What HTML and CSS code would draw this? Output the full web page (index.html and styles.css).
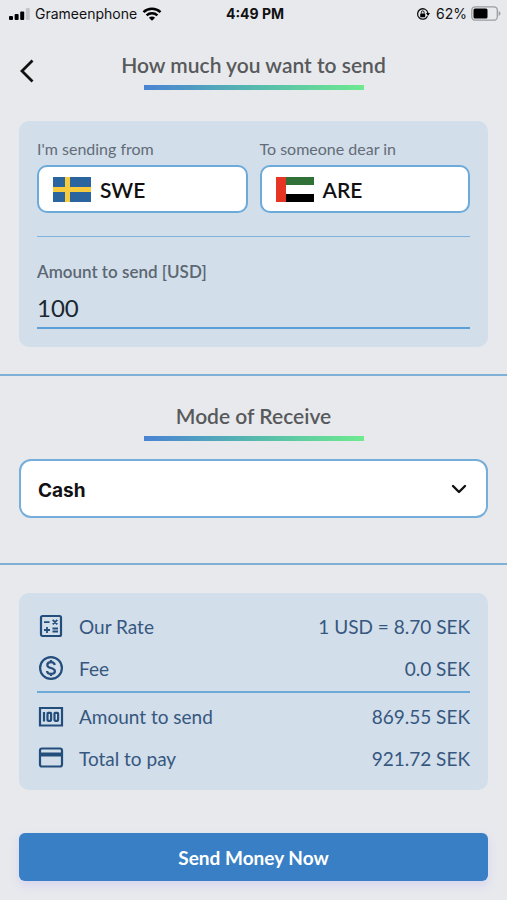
FILE: index.html
```html
<!DOCTYPE html>
<html lang="en">
<head>
<meta charset="utf-8">
<meta name="viewport" content="width=device-width, initial-scale=1">
<title>Send money</title>
<link rel="stylesheet" href="styles.css">
</head>
<body>
<div class="status">
  <div class="status-side">
    <svg class="signal" width="21" height="12" viewBox="0 0 21 12" aria-hidden="true">
      <rect x="0" y="8" width="4" height="4" rx="1"/>
      <rect x="5.600" y="6" width="4" height="6" rx="1"/>
      <rect x="11.200" y="3.500" width="4" height="8.500" rx="1"/>
      <rect x="16.800" y="0" width="4" height="12" rx="1" fill="#c3c5c9"/>
    </svg>
    <span>Grameenphone</span>
    <svg width="20" height="14" viewBox="0 0 20 14" aria-hidden="true">
      <path d="M1.500 5.200a12.300 12.300 0 0 1 17 0M4.600 8.300a7.900 7.900 0 0 1 10.800 0" fill="none" stroke="#000" stroke-width="2.500"/>
      <path d="M10 13.800 6.900 10.700a4.400 4.400 0 0 1 6.200 0z"/>
    </svg>
  </div>
  <time class="clock">4:49 PM</time>
  <div class="status-side status-end">
    <svg class="lock" width="14" height="14" viewBox="0 0 14 14" aria-hidden="true">
      <path d="M11.900 6a5.200 5.200 0 1 0-.4 3.200" fill="none" stroke="#111" stroke-width="1.300"/>
      <path d="M10 6h4l-2 3z"/>
      <rect x="4.200" y="6.400" width="5" height="3.800" rx=".6"/>
      <path d="M5.300 6.500V5.300a1.400 1.400 0 0 1 2.800 0v1.200" fill="none" stroke="#111"/>
    </svg>
    <span>62%</span>
    <svg width="30" height="15" viewBox="0 0 30 15" aria-hidden="true">
      <rect x=".8" y=".8" width="25.500" height="13.400" rx="3.500" fill="none" stroke="#9b9da0" stroke-width="1.300"/>
      <rect x="2.500" y="2.500" width="14" height="10" rx="1.500"/>
      <path d="M27.600 5a2.600 2.600 0 0 1 0 5z" fill="#9b9da0"/>
    </svg>
  </div>
</div>

<header class="header">
  <button class="back" type="button" aria-label="Back">
    <svg width="14" height="24" viewBox="0 0 14 24" aria-hidden="true"><path d="M12.500 1.500 2 12l10.500 10.500" fill="none" stroke="#111" stroke-width="2.800"/></svg>
  </button>
  <h1 class="title">How much you want to send</h1>
</header>

<main>
  <section class="card transfer">
    <div class="countries">
      <div class="country">
        <label class="label" for="from">I'm sending from</label>
        <button class="picker" id="from" type="button">
          <svg width="38" height="25" viewBox="0 0 38 25" aria-hidden="true">
            <path fill="#2b659f" d="M0 0h38v25H0z"/>
            <path fill="#f7cb3e" d="M12 0h5v25h-5zM0 10h38v5H0z"/>
          </svg>
          <span>SWE</span>
        </button>
      </div>
      <div class="country">
        <label class="label" for="to">To someone dear in</label>
        <button class="picker" id="to" type="button">
          <svg width="38" height="25" viewBox="0 0 38 25" aria-hidden="true">
            <path fill="#fff" d="M0 0h38v25H0z"/>
            <path fill="#2f7137" d="M0 0h38v8H0z"/>
            <path d="M0 17h38v8H0z"/>
            <path fill="#e73524" d="M0 0h10v25H0z"/>
          </svg>
          <span>ARE</span>
        </button>
      </div>
    </div>
    <div class="amount">
      <label class="amount-label" for="amount">Amount to send [USD]</label>
      <input class="amount-input" id="amount" type="text" inputmode="decimal" value="100">
    </div>
  </section>

  <section class="mode">
    <h2 class="title"><label for="mode">Mode of Receive</label></h2>
    <div class="select-wrap">
      <select class="select" id="mode"><option>Cash</option></select>
      <svg class="chevron" width="16" height="10" viewBox="0 0 16 10" aria-hidden="true"><path d="M2 2l6 6 6-6" fill="none" stroke="#111" stroke-width="2.400" stroke-linecap="round" stroke-linejoin="round"/></svg>
    </div>
  </section>

  <dl class="card summary">
    <div class="row">
      <dt>
        <svg class="icon" viewBox="0 0 24 24" aria-hidden="true"><rect x="2" y="2" width="20" height="20" rx="1.500"/><path d="M5 8.200h5.500M13.700 5.800l4.600 4.600M18.300 5.800l-4.600 4.600M5 16h6M8 13v6M13.500 14.500h5.500M13.500 17.500h5.500" stroke-width="1.800"/></svg>
        Our Rate
      </dt>
      <dd>1 USD = 8.70 SEK</dd>
    </div>
    <div class="row">
      <dt>
        <svg class="icon" viewBox="0 0 24 24" aria-hidden="true"><circle cx="12" cy="12" r="10.900"/><path d="M15.800 9c-.4-1.800-1.800-2.800-3.800-2.800S8.300 7.200 8.300 8.900c0 2 1.700 2.600 3.700 3.100s3.900 1.200 3.900 3.200c0 1.700-1.600 2.700-3.900 2.700-2.200 0-3.800-1-4-2.900M12 4v2.500M12 17.500V20"/></svg>
        Fee
      </dt>
      <dd>0.0 SEK</dd>
    </div>
    <div class="row row-split">
      <dt>
        <svg class="icon" viewBox="0 0 24 24" aria-hidden="true"><path d="M1 3h22v17.500H1zM5 7v9.500"/><rect x="8.500" y="7.800" width="3.600" height="8" rx=".7"/><rect x="15.500" y="7.800" width="3.600" height="8" rx=".7"/></svg>
        Amount to send
      </dt>
      <dd>869.55 SEK</dd>
    </div>
    <div class="row">
      <dt>
        <svg class="icon" viewBox="0 0 24 24" aria-hidden="true"><rect x="1" y="2.500" width="22" height="18" rx="2"/><path d="M1 8.500h22" stroke-width="4"/></svg>
        Total to pay
      </dt>
      <dd>921.72 SEK</dd>
    </div>
  </dl>

  <button class="submit" type="button">Send Money Now</button>
</main>
</body>
</html>
```
FILE: styles.css
```css
* {
  box-sizing: border-box;
}

body {
  margin: 0;
  background: #e7e9ed;
  color: #111;
  font-family: Lato, "Liberation Sans", sans-serif;
}

svg {
  display: block;
  flex: none;
}

button,
input,
select {
  color: inherit;
  font: inherit;
}

.status {
  display: grid;
  grid-template-columns: 1fr auto 1fr;
  align-items: center;
  height: 27px;
  padding: 0 6px 0 9px;
  font-family: Inter, "Liberation Sans", sans-serif;
  font-size: 14px;
}

.status-side {
  display: flex;
  align-items: center;
  gap: 5px;
}

.status-end {
  justify-content: flex-end;
  gap: 4px;
}

.lock {
  margin-right: 2px;
}

.clock {
  font-weight: 700;
}

.header {
  display: grid;
  grid-template-columns: 40px 1fr 40px;
  align-items: center;
  padding: 24px 0 31px;
}

.back {
  display: flex;
  justify-content: flex-end;
  padding: 4px 6px;
  border: 0;
  background: none;
}

.title {
  margin: 0;
  color: #58595b;
  font-size: 21px;
  font-weight: 600;
  line-height: 28px;
  text-align: center;
}

.title::after {
  content: "";
  display: block;
  width: 220px;
  height: 5px;
  margin: 6px auto 0;
  background: linear-gradient(90deg, #4a83d4, #55b9ae 50%, #6eea8f);
}

.card {
  margin: 0 19px;
  padding: 18px;
  border-radius: 10px;
  background: #d2deea;
}

.countries {
  display: grid;
  grid-template-columns: 1fr 1fr;
  gap: 12px;
  padding-bottom: 23px;
  border-bottom: 1px solid #7fb2dc;
}

.label {
  display: block;
  margin-bottom: 6px;
  color: #626c77;
  font-size: 16px;
  line-height: 20px;
}

.picker {
  display: flex;
  align-items: center;
  gap: 9px;
  width: 100%;
  height: 48px;
  padding: 0 14px;
  border: 2px solid #6caada;
  border-radius: 10px;
  background: #fff;
  font-size: 21px;
  font-weight: 600;
}

.amount {
  padding-top: 24px;
}

.amount-label {
  display: block;
  color: #5c6772;
  font-size: 17px;
  font-weight: 600;
  line-height: 22px;
}

.amount-input {
  display: block;
  width: 100%;
  height: 46px;
  padding: 5px 0 0;
  border: 0;
  border-bottom: 2px solid #5b9fd6;
  background: none;
  color: #1c2730;
  font-size: 24px;
}

.mode {
  margin: 27px 0 28px;
  padding: 26px 19px 45px;
  border: solid #7fb0d5;
  border-width: 2px 0;
}

.select-wrap {
  position: relative;
  margin-top: 18px;
}

.select {
  display: block;
  width: 100%;
  height: 59px;
  padding: 4px 48px 0 17px;
  border: 2px solid #75aedb;
  border-radius: 12px;
  appearance: none;
  background: #fff;
  font-family: Inter, "Liberation Sans", sans-serif;
  font-size: 19px;
  font-weight: 700;
}

.chevron {
  position: absolute;
  top: 25px;
  right: 21px;
  pointer-events: none;
}

.summary {
  padding: 12px 18px 11px;
  color: #36577f;
  font-size: 19px;
}

.row {
  display: flex;
  align-items: center;
  justify-content: space-between;
  height: 42px;
}

.row-split {
  height: 46px;
  margin-top: 2px;
  padding-top: 3px;
  border-top: 2px solid #6cabd8;
}

.row dt {
  display: flex;
  align-items: center;
  gap: 14px;
}

.row dd {
  margin: 0;
}

.icon {
  width: 28px;
  height: 24px;
  fill: none;
  stroke: #234e7c;
  stroke-width: 2.2;
}

.submit {
  display: block;
  width: calc(100% - 38px);
  height: 48px;
  margin: 43px 19px 19px;
  border: 0;
  border-radius: 6px;
  background: #397fc5;
  box-shadow: 0 4px 10px #d7d4f0;
  color: #fff;
  font-size: 19px;
  font-weight: 700;
}
```
